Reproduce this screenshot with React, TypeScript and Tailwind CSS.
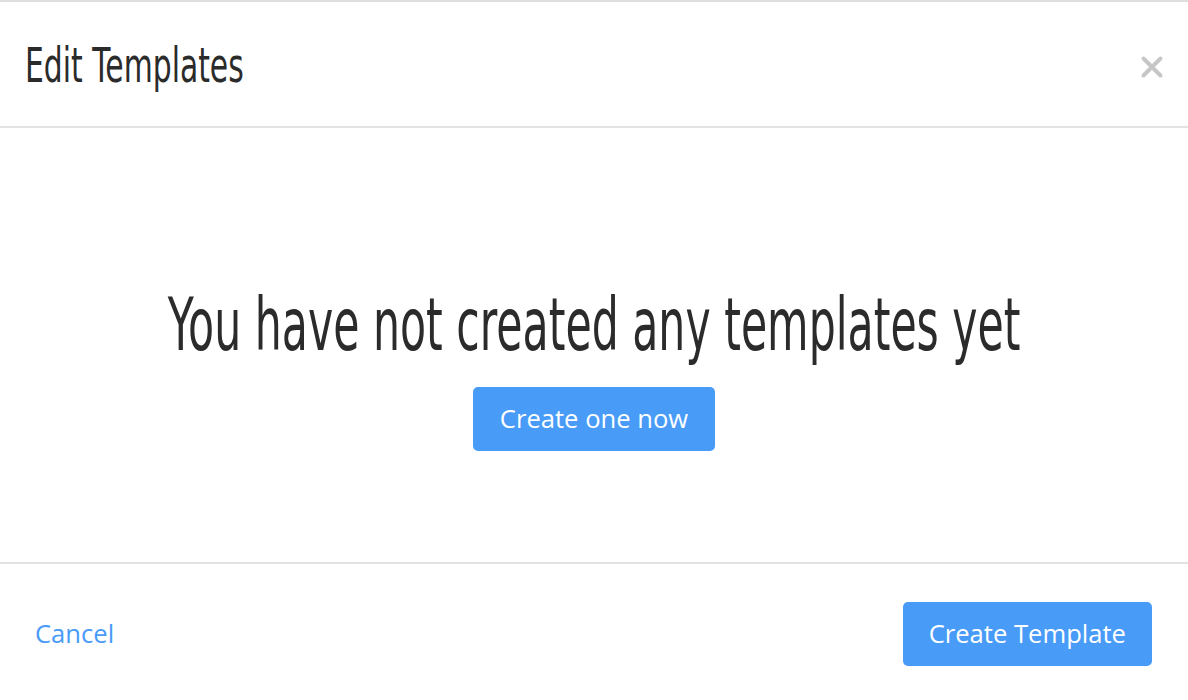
import { X } from "lucide-react";

const heading = "font-['DejaVu_Sans',sans-serif]";
const body = "font-['Open_Sans','Liberation_Sans',sans-serif]";

export default function App() {
  return (
    <div className="flex h-[700px] w-full flex-col border-t-2 border-[#dedede] bg-white">
      <div className="flex h-[126px] items-center justify-between border-b-2 border-[#e2e2e2] pl-[25px] pr-[19px] pt-[1px]">
        <h1
          className={`${heading} inline-block origin-left scale-x-[0.621] whitespace-nowrap text-[48px] leading-none text-[#2b2b2b]`}
        >
          Edit Templates
        </h1>
        <button className="mt-[4px] text-[#c6c6c6]">
          <X className="h-[34px] w-[34px]" strokeWidth={2.8} />
        </button>
      </div>

      <div className="flex h-[434px] flex-col items-center pt-[160px]">
        <h2
          className={`${heading} inline-block scale-x-[0.584] whitespace-nowrap text-[73px] leading-none text-[#2b2b2b]`}
        >
          You have not created any templates yet
        </h2>
        <button className={`${body} mt-[26px] h-[64px] rounded-[5px] bg-[#489bf7] px-[27px] text-[25.6px] text-white`}>
          Create one now
        </button>
      </div>

      <div className="flex flex-1 items-center justify-between border-t-2 border-[#e2e2e2] pl-[35px] pr-[36px] pt-[4px]">
        <button className={`${body} text-[25.6px] text-[#489bf7]`}>Cancel</button>
        <button className={`${body} h-[64px] rounded-[5px] bg-[#489bf7] px-[26px] text-[25.6px] text-white`}>
          Create Template
        </button>
      </div>
    </div>
  );
}
